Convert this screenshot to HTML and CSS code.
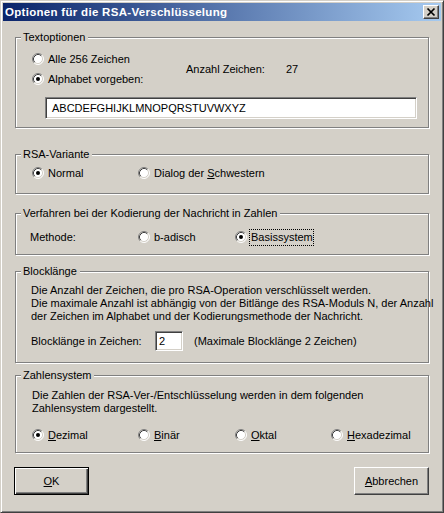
FILE: index.html
```html
<!DOCTYPE html>
<html lang="de">
<head>
<meta charset="utf-8">
<title>Optionen für die RSA-Verschlüsselung</title>
<link rel="stylesheet" href="styles.css">
</head>
<body>
<svg class="sprites" aria-hidden="true">
  <defs>
    <symbol id="radio" viewBox="0 0 12 12">
      <circle cx="6" cy="6" r="5" fill="#fff"/>
      <path d="M2.11 9.89A5.5 5.5 0 0 1 9.89 2.11" fill="none" stroke="#808080"/>
      <path d="M9.89 2.11A5.5 5.5 0 0 1 2.11 9.89" fill="none" stroke="#fff"/>
      <path d="M2.82 9.18A4.5 4.5 0 0 1 9.18 2.82" fill="none" stroke="#404040"/>
      <path d="M9.18 2.82A4.5 4.5 0 0 1 2.82 9.18" fill="none" stroke="#d4d0c8"/>
    </symbol>
    <symbol id="radio-on" viewBox="0 0 12 12">
      <use href="#radio"/>
      <circle cx="6" cy="6" r="2" fill="#000"/>
    </symbol>
  </defs>
</svg>
<div class="window">
  <div class="titlebar">
    <span class="title">Optionen für die RSA-Verschlüsselung</span>
    <span class="close"><svg width="14" height="12" viewBox="0 0 14 12"><path d="M3.5 2.5L10.5 9.5M10.5 2.5L3.5 9.5" stroke="#000" stroke-width="1.7"/></svg></span>
  </div>
  <div class="client">
    <div class="group g1">
      <span class="legend">Textoptionen</span>
      <div class="g1-grid">
        <label class="opt"><svg class="rb"><use href="#radio"/></svg><span>Alle 256 Zeichen</span></label>
        <label class="opt r2"><svg class="rb"><use href="#radio-on"/></svg><span>Alphabet vorgeben:</span></label>
        <span class="anzahl">Anzahl Zeichen:</span>
        <span class="anzahl-val">27</span>
      </div>
      <div class="edit alphabet">ABCDEFGHIJKLMNOPQRSTUVWXYZ</div>
    </div>

    <div class="group g2">
      <span class="legend">RSA-Variante</span>
      <div class="row">
        <label class="opt w106"><svg class="rb"><use href="#radio-on"/></svg><span>Normal</span></label>
        <label class="opt"><svg class="rb"><use href="#radio"/></svg><span>Dialog der <u>S</u>chwestern</span></label>
      </div>
    </div>

    <div class="group g3">
      <span class="legend">Verfahren bei der Kodierung der Nachricht in Zahlen</span>
      <div class="row">
        <span class="methode">Methode:</span>
        <label class="opt w97"><svg class="rb"><use href="#radio"/></svg><span>b-adisch</span></label>
        <label class="opt focus-opt"><svg class="rb"><use href="#radio-on"/></svg><span class="focus">Basissystem</span></label>
      </div>
    </div>

    <div class="group g4">
      <span class="legend">Blocklänge</span>
      <div class="para">
        <span class="line">Die Anzahl der Zeichen, die pro RSA-Operation verschlüsselt werden.</span>
        <span class="line">Die maximale Anzahl ist abhängig von der Bitlänge des RSA-Moduls N, der Anzahl</span>
        <span class="line">der Zeichen im Alphabet und der Kodierungsmethode der Nachricht.</span>
      </div>
      <div class="row block-row">
        <span class="bl-label">Blocklänge in Zeichen:</span>
        <span class="edit small">2</span>
        <span class="bl-max">(Maximale Blocklänge 2 Zeichen)</span>
      </div>
    </div>

    <div class="group g5">
      <span class="legend">Zahlensystem</span>
      <div class="para">
        <span class="line">Die Zahlen der RSA-Ver-/Entschlüsselung werden in dem folgenden</span>
        <span class="line">Zahlensystem dargestellt.</span>
      </div>
      <div class="row zs-row">
        <label class="opt w106"><svg class="rb"><use href="#radio-on"/></svg><span><u>D</u>ezimal</span></label>
        <label class="opt w97"><svg class="rb"><use href="#radio"/></svg><span><u>B</u>inär</span></label>
        <label class="opt w96"><svg class="rb"><use href="#radio"/></svg><span><u>O</u>ktal</span></label>
        <label class="opt"><svg class="rb"><use href="#radio"/></svg><span><u>H</u>exadezimal</span></label>
      </div>
    </div>

    <div class="buttons">
      <button class="btn default" type="button"><u>O</u>K</button>
      <button class="btn" type="button"><u>A</u>bbrechen</button>
    </div>
  </div>
</div>
</body>
</html>
```
FILE: styles.css
```css
* { box-sizing: border-box; }
html, body { margin: 0; padding: 0; }
body {
  width: 444px;
  height: 513px;
  background: #d4d0c8;
  font-family: "Liberation Sans", Arial, sans-serif;
  font-size: 11px;
  line-height: 13px;
  color: #000;
  overflow: hidden;
}
.sprites { display: none; }

.window {
  width: 444px;
  height: 513px;
  border: 1px solid;
  border-color: #d4d0c8 #404040 #404040 #d4d0c8;
  box-shadow: inset 1px 1px #fff, inset -1px -1px #808080;
  padding: 2px;
  background: #d4d0c8;
}

.titlebar {
  height: 18px;
  display: flex;
  align-items: center;
  padding: 0 2px 0 2px;
  background: linear-gradient(to right, #0a246a, #a6caf0);
}
.title {
  color: #fff;
  font-weight: bold;
  font-size: 11.5px;
  letter-spacing: 0.3px;
  white-space: nowrap;
}
.close {
  margin-left: auto;
  width: 16px;
  height: 14px;
  background: #d4d0c8;
  border: 1px solid;
  border-color: #fff #404040 #404040 #fff;
  box-shadow: inset -1px -1px #808080;
  display: flex;
}
.close svg { display: block; }

.client {
  padding: 0 0 0 11px;
}

.group {
  position: relative;
  width: 414px;
  margin-left: 1px;
  border: 1px solid #808080;
  box-shadow: inset 1px 1px #fff, 1px 1px #fff;
}
.legend {
  position: absolute;
  top: -7px;
  left: 5px;
  padding: 0 3px 0 2px;
  background: #d4d0c8;
  line-height: 13px;
  white-space: nowrap;
}

.opt {
  display: flex;
  align-items: center;
  gap: 4px;
  white-space: nowrap;
}
.rb {
  width: 12px;
  height: 12px;
  flex: none;
  display: block;
}
.row {
  display: flex;
  align-items: center;
  height: 20px;
}
.w106 { width: 106px; }
.w97 { width: 97px; }
.w96 { width: 96px; }

.edit {
  background: #fff;
  border: 1px solid;
  border-color: #808080 #fff #fff #808080;
  box-shadow: inset 1px 1px #404040, inset -1px -1px #d4d0c8;
  white-space: nowrap;
}

/* Textoptionen */
.g1 {
  margin-top: 16px;
  padding: 11px 11px 8px 16px;
}
.g1-grid {
  display: grid;
  grid-template-columns: 154px 100px auto;
  grid-template-rows: 20px 20px;
  align-items: center;
}
.g1-grid .r2 { grid-row: 2; grid-column: 1; }
.anzahl { grid-row: 1 / 3; grid-column: 2; }
.anzahl-val { grid-row: 1 / 3; grid-column: 3; }
.alphabet {
  margin: 8px 0 0 13px;
  width: 372px;
  height: 22px;
  padding: 4px 4px 0 6px;
}

/* RSA-Variante */
.g2 {
  margin-top: 26px;
  padding: 8px 11px 10px 16px;
}

/* Verfahren */
.g3 {
  margin-top: 19px;
  padding: 13px 11px 7px 14px;
}
.methode { width: 108px; }
.focus-opt { gap: 2px; }
.focus {
  border: 1px dotted #000;
  padding: 1px 0 1px 1px;
}

/* Blocklänge */
.g4 {
  margin-top: 16px;
  padding: 12px 11px 11px 15px;
}
.para .line { display: block; white-space: nowrap; }
.block-row { margin-top: 8px; }
.bl-label { width: 124px; }
.edit.small {
  width: 28px;
  height: 20px;
  padding: 3px 0 0 3px;
}
.bl-max { margin-left: 11px; }

/* Zahlensystem */
.g5 {
  margin-top: 12px;
  padding: 13px 11px 7px 16px;
}
.zs-row { margin-top: 10px; }

/* Buttons */
.buttons {
  display: flex;
  justify-content: space-between;
  width: 415px;
  margin-top: 14px;
}
.btn {
  width: 75px;
  height: 28px;
  padding: 0;
  background: #d4d0c8;
  font-family: "Liberation Sans", Arial, sans-serif;
  font-size: 11px;
  color: #000;
  border: 1px solid;
  border-color: #fff #404040 #404040 #fff;
  box-shadow: inset -1px -1px #808080;
}
.btn.default {
  border: 1px solid #000;
  box-shadow: inset 1px 1px #fff, inset -1px -1px #404040, inset -2px -2px #808080;
}
```
